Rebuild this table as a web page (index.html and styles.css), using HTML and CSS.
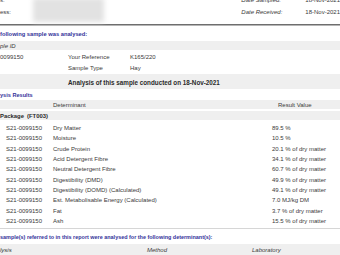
FILE: index.html
```html
<!DOCTYPE html>
<html>
<head>
<meta charset="utf-8">
<link rel="stylesheet" href="styles.css">
</head>
<body>
<div class="page">
  <div class="top">
    <div class="labels">
      <div class="tl">s:</div>
      <div class="tl">ess:</div>
    </div>
    <div class="blur"></div>
    <div class="dates">
      <div class="drow"><span class="dl">Date Sampled:</span><span class="dv">18-Nov-2021</span></div>
      <div class="drow"><span class="dl">Date Received:</span><span class="dv">18-Nov-2021</span></div>
    </div>
  </div>
  <div class="rule"></div>

  <div class="head h1">following sample was analysed:</div>
  <div class="band b1"><span class="it">ple ID</span></div>
  <div class="srow first">
    <span class="c1">0099150</span><span class="c2">Your Reference</span><span class="c3">K165/220</span>
  </div>
  <div class="srow">
    <span class="c1"></span><span class="c2">Sample Type</span><span class="c3">Hay</span>
  </div>
  <div class="band b2"><span class="bold an">Analysis of this sample conducted on 18-Nov-2021</span></div>

  <div class="head h2">ysis Results</div>
  <div class="band b3"><span class="r2">Determinant</span><span class="r3h">Result Value</span></div>
  <div class="band b4"><span class="bold pk">Package (FT003)</span></div>

  <div class="results">
    <div class="rrow"><span class="r1">S21-0099150</span><span class="r2">Dry Matter</span><span class="r3">89.5 %</span></div>
    <div class="rrow"><span class="r1">S21-0099150</span><span class="r2">Moisture</span><span class="r3">10.5 %</span></div>
    <div class="rrow"><span class="r1">S21-0099150</span><span class="r2">Crude Protein</span><span class="r3">20.1 % of dry matter</span></div>
    <div class="rrow"><span class="r1">S21-0099150</span><span class="r2">Acid Detergent Fibre</span><span class="r3">34.1 % of dry matter</span></div>
    <div class="rrow"><span class="r1">S21-0099150</span><span class="r2">Neutral Detergent Fibre</span><span class="r3">60.7 % of dry matter</span></div>
    <div class="rrow"><span class="r1">S21-0099150</span><span class="r2">Digestibility (DMD)</span><span class="r3">49.9 % of dry matter</span></div>
    <div class="rrow"><span class="r1">S21-0099150</span><span class="r2">Digestibility (DOMD) (Calculated)</span><span class="r3">49.1 % of dry matter</span></div>
    <div class="rrow"><span class="r1">S21-0099150</span><span class="r2">Est. Metabolisable Energy (Calculated)</span><span class="r3">7.0 MJ/kg DM</span></div>
    <div class="rrow"><span class="r1">S21-0099150</span><span class="r2">Fat</span><span class="r3">3.7 % of dry matter</span></div>
    <div class="rrow"><span class="r1">S21-0099150</span><span class="r2">Ash</span><span class="r3">15.5 % of dry matter</span></div>
  </div>
  <div class="thin"></div>

  <div class="head h3">sample(s) referred to in this report were analysed for the following determinant(s):</div>
  <div class="band b5"><span class="it m1">lysis</span><span class="it m2">Method</span><span class="it m3">Laboratory</span></div>
</div>
</body>
</html>
```
FILE: styles.css
```css
html, body {
  margin: 0;
  padding: 0;
  background: #fff;
}
body {
  width: 340px;
  height: 255px;
  overflow: hidden;
  font-family: "Liberation Sans", Arial, sans-serif;
  font-size: 6px;
  color: #3a3a3a;
}
.page {
  width: 340px;
}
.top {
  display: flex;
  height: 30px;
  margin-top: -6px;
}
.labels {
  width: 33px;
}
.tl {
  height: 12px;
  line-height: 12px;
}
.blur {
  width: 72px;
  height: 24px;
  margin-top: 4px;
  margin-left: 1px;
  background: #e2e2e2;
  filter: blur(2.5px);
}
.dates {
  margin-left: 137px;
}
.drow {
  display: flex;
  height: 12px;
  line-height: 12px;
  white-space: nowrap;
}
.dl {
  width: 64px;
  font-style: italic;
}
.rule {
  height: 0;
  border-top: 1px solid #6e6e6e;
  border-bottom: 1px solid #b5b5b5;
}
.head {
  color: #33339a;
  font-weight: bold;
  white-space: nowrap;
}
.h1 {
  height: 15px;
  line-height: 16px;
  font-size: 5.75px;
}
.band {
  background: #efefef;
  display: flex;
  align-items: center;
  white-space: nowrap;
}
.b1 {
  height: 9px;
}
.it {
  font-style: italic;
}
.srow {
  display: flex;
  height: 11px;
  line-height: 11px;
  white-space: nowrap;
}
.first {
  margin-top: 2px;
}
.c1 {
  width: 68px;
}
.c2 {
  width: 62px;
}
.b2 {
  height: 15px;
  padding-left: 68px;
  padding-top: 1px;
  box-sizing: border-box;
}
.bold {
  font-weight: bold;
  color: #2a2a2a;
}
.an {
  font-size: 6.3px;
}
.h2 {
  height: 11px;
  line-height: 12px;
  font-size: 5.6px;
}
.b3 {
  height: 9px;
}
.b3 .r2 {
  margin-left: 53px;
  width: 225px;
}
.b4 {
  height: 9px;
  margin-top: 2px;
}
.pk {
  font-size: 5.9px;
  word-spacing: 1.5px;
}
.results {
  padding-top: 3px;
}
.rrow {
  display: flex;
  height: 10.33px;
  line-height: 10.33px;
  white-space: nowrap;
}
.r1 {
  width: 47px;
  padding-left: 6px;
}
.rrow .r2 {
  width: 219px;
}
.thin {
  margin-top: 2px;
  height: 1px;
  background: #d6d6d6;
}
.h3 {
  height: 15px;
  line-height: 17px;
  font-size: 5.45px;
}
.b5 {
  height: 12px;
}
.m1 {
  width: 147px;
}
.m2 {
  width: 105px;
}
```
